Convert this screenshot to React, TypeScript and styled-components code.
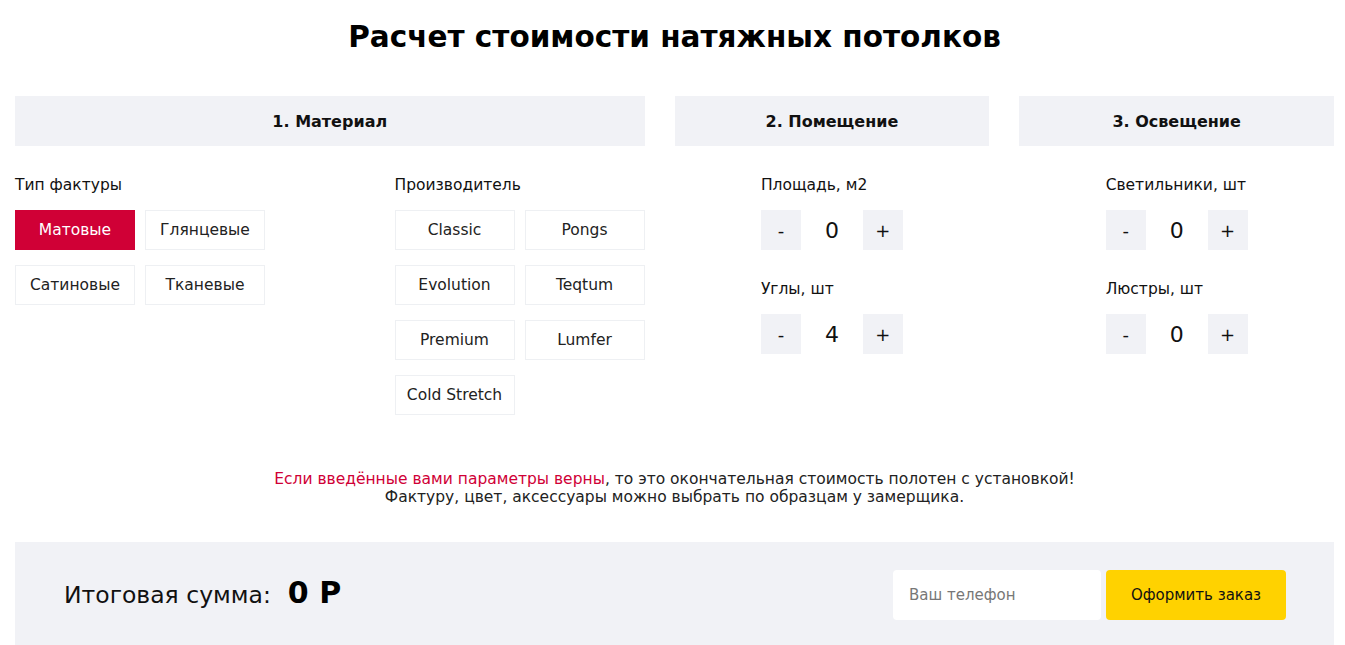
import React, { useState } from "react";
import styled, { createGlobalStyle } from "styled-components";

const Global = createGlobalStyle`
  html, body { margin: 0; padding: 0; background: #fff; }
  body { font-family: "DejaVu Sans", "Noto Sans", sans-serif; color: #111; }
  * { box-sizing: border-box; }
`;

const Page = styled.div`
  width: 1319px;
  margin-left: 15px;
  padding-top: 17px;
`;

const Title = styled.h1`
  margin: 0 0 39px;
  text-align: center;
  font-size: 29.5px;
  line-height: 40px;
  font-weight: 600;
  color: #000;
`;

const Columns = styled.div`
  display: grid;
  grid-template-columns: 2fr 1fr 1fr;
  column-gap: 30px;
`;

const Section = styled.div`
  display: flex;
  flex-direction: column;
`;

const SectionHead = styled.div`
  height: 50px;
  background: #f1f2f6;
  display: flex;
  align-items: center;
  justify-content: center;
  font-size: 16px;
  font-weight: 600;
  color: #111;
`;

const SectionBody = styled.div<{ $center?: boolean }>`
  padding-top: 29px;
  display: flex;
  justify-content: ${(p) => (p.$center ? "center" : "space-between")};
`;

const SubCol = styled.div`
  width: 250px;
`;

const Label = styled.div`
  font-size: 15.5px;
  line-height: 20px;
  color: #111;
  margin-bottom: 15px;
`;

const Chips = styled.div`
  display: flex;
  flex-wrap: wrap;
  gap: 15px 10px;
`;

const Chip = styled.button<{ $active?: boolean }>`
  width: 120px;
  height: 40px;
  padding: 0;
  font-family: inherit;
  font-size: 15.5px;
  color: ${(p) => (p.$active ? "#fff" : "#222")};
  background: ${(p) => (p.$active ? "#d00036" : "#fff")};
  border: 1px solid ${(p) => (p.$active ? "#d00036" : "#eef0f3")};
  cursor: pointer;
`;

const CounterGroup = styled.div`
  display: flex;
  flex-direction: column;
  gap: 29px;
`;

const Field = styled.div`
  display: flex;
  flex-direction: column;
`;

const Counter = styled.div`
  display: flex;
  align-items: center;
`;

const StepBtn = styled.button`
  width: 40px;
  height: 40px;
  border: none;
  padding: 0;
  background: #f1f2f6;
  font-family: inherit;
  font-size: 18px;
  color: #111;
  cursor: pointer;
`;

const Value = styled.div`
  width: 62px;
  text-align: center;
  font-size: 22px;
  color: #111;
`;

const Note = styled.p`
  margin: 55px 0 36px;
  text-align: center;
  font-size: 15.5px;
  line-height: 18px;
  color: #222;
`;

const Accent = styled.span`
  color: #d00036;
`;

const Footer = styled.div`
  background: #f1f2f6;
  height: 106px;
  padding: 0 48px 0 49px;
  display: flex;
  align-items: center;
  justify-content: space-between;
`;

const Total = styled.div`
  display: flex;
  align-items: baseline;
  gap: 17px;
  margin-top: -6px;
`;

const TotalLabel = styled.span`
  font-size: 23.5px;
  font-weight: 400;
  color: #111;
`;

const TotalSum = styled.span`
  font-size: 30px;
  font-weight: 700;
  color: #000;
`;

const OrderForm = styled.div`
  display: flex;
  gap: 5px;
`;

const Phone = styled.input`
  width: 208px;
  height: 50px;
  border: none;
  border-radius: 4px;
  background: #fff;
  padding: 0 16px;
  font-family: inherit;
  font-size: 15px;
  color: #111;
  outline: none;
  &::placeholder { color: #777; }
`;

const OrderBtn = styled.button`
  width: 180px;
  height: 50px;
  border: none;
  border-radius: 4px;
  background: #ffd200;
  font-family: inherit;
  font-size: 15px;
  color: #111;
  cursor: pointer;
`;

function Stepper({ label, value }: { label: string; value: number }) {
  const [v, setV] = useState(value);
  return (
    <Field>
      <Label>{label}</Label>
      <Counter>
        <StepBtn onClick={() => setV(Math.max(0, v - 1))}>-</StepBtn>
        <Value>{v}</Value>
        <StepBtn onClick={() => setV(v + 1)}>+</StepBtn>
      </Counter>
    </Field>
  );
}

export default function App() {
  const [texture, setTexture] = useState("Матовые");
  const [maker, setMaker] = useState("");
  const textures = ["Матовые", "Глянцевые", "Сатиновые", "Тканевые"];
  const makers = ["Classic", "Pongs", "Evolution", "Teqtum", "Premium", "Lumfer", "Cold Stretch"];
  return (
    <>
      <Global />
      <Page>
        <Title>Расчет стоимости натяжных потолков</Title>
        <Columns>
          <Section>
            <SectionHead>1. Материал</SectionHead>
            <SectionBody>
              <SubCol>
                <Label>Тип фактуры</Label>
                <Chips>
                  {textures.map((t) => (
                    <Chip key={t} $active={t === texture} onClick={() => setTexture(t)}>
                      {t}
                    </Chip>
                  ))}
                </Chips>
              </SubCol>
              <SubCol>
                <Label>Производитель</Label>
                <Chips>
                  {makers.map((m) => (
                    <Chip key={m} $active={m === maker} onClick={() => setMaker(m)}>
                      {m}
                    </Chip>
                  ))}
                </Chips>
              </SubCol>
            </SectionBody>
          </Section>
          <Section>
            <SectionHead>2. Помещение</SectionHead>
            <SectionBody $center>
              <CounterGroup>
                <Stepper label="Площадь, м2" value={0} />
                <Stepper label="Углы, шт" value={4} />
              </CounterGroup>
            </SectionBody>
          </Section>
          <Section>
            <SectionHead>3. Освещение</SectionHead>
            <SectionBody $center>
              <CounterGroup>
                <Stepper label="Светильники, шт" value={0} />
                <Stepper label="Люстры, шт" value={0} />
              </CounterGroup>
            </SectionBody>
          </Section>
        </Columns>
        <Note>
          <Accent>Если введённые вами параметры верны</Accent>, то это окончательная стоимость полотен с установкой!
          <br />
          Фактуру, цвет, аксессуары можно выбрать по образцам у замерщика.
        </Note>
        <Footer>
          <Total>
            <TotalLabel>Итоговая сумма:</TotalLabel>
            <TotalSum>0 Р</TotalSum>
          </Total>
          <OrderForm>
            <Phone placeholder="Ваш телефон" />
            <OrderBtn>Оформить заказ</OrderBtn>
          </OrderForm>
        </Footer>
      </Page>
    </>
  );
}
